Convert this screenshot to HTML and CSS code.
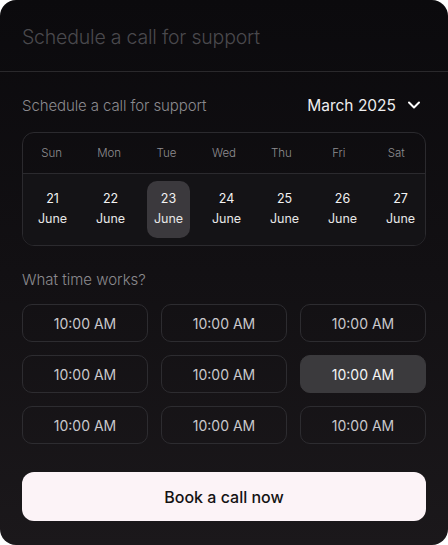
FILE: index.html
```html
<!DOCTYPE html>
<html>
<head>
<meta charset="utf-8">
<link rel="stylesheet" href="styles.css">
</head>
<body>
<div class="card">
  <div class="header">Schedule a call for support</div>
  <div class="content">
    <div class="row-title">
      <span class="subtitle">Schedule a call for support</span>
      <span class="month">March 2025
        <svg class="chev" width="14" height="14" viewBox="0 0 14 14"><path d="M2 4.5 L7 9.5 L12 4.5" fill="none" stroke="#fff" stroke-width="2" stroke-linecap="round" stroke-linejoin="round"/></svg>
      </span>
    </div>
    <div class="calendar">
      <div class="days">
        <span>Sun</span><span>Mon</span><span>Tue</span><span>Wed</span><span>Thu</span><span>Fri</span><span>Sat</span>
      </div>
      <div class="dates">
        <div class="date"><span class="num">21</span><span class="mon">June</span></div>
        <div class="date"><span class="num">22</span><span class="mon">June</span></div>
        <div class="date selected"><span class="num">23</span><span class="mon">June</span></div>
        <div class="date"><span class="num">24</span><span class="mon">June</span></div>
        <div class="date"><span class="num">25</span><span class="mon">June</span></div>
        <div class="date"><span class="num">26</span><span class="mon">June</span></div>
        <div class="date"><span class="num">27</span><span class="mon">June</span></div>
      </div>
    </div>
    <div class="label">What time works?</div>
    <div class="times">
      <div class="slot">10:00 AM</div>
      <div class="slot">10:00 AM</div>
      <div class="slot">10:00 AM</div>
      <div class="slot">10:00 AM</div>
      <div class="slot">10:00 AM</div>
      <div class="slot active">10:00 AM</div>
      <div class="slot">10:00 AM</div>
      <div class="slot">10:00 AM</div>
      <div class="slot">10:00 AM</div>
    </div>
    <button class="book">Book a call now</button>
  </div>
</div>
</body>
</html>
```
FILE: styles.css
```css
* { box-sizing: border-box; }
html, body { margin: 0; padding: 0; background: #fff; }
body { font-family: Inter, "Noto Sans", sans-serif; }
.card {
  width: 448px;
  height: 545px;
  border-radius: 16px;
  background: linear-gradient(180deg, #0b0a0d 0%, #121013 50%, #1b181b 100%);
  overflow: hidden;
}
.header {
  height: 72px;
  border-bottom: 1px solid #2a292c;
  padding: 2px 22px 0;
  display: flex;
  align-items: center;
  font-size: 19.5px;
  font-weight: 300;
  color: #4a494d;
  letter-spacing: -0.2px;
}
.content { padding: 22px 22px 0; }
.row-title {
  display: flex;
  justify-content: space-between;
  align-items: center;
  height: 22px;
}
.subtitle { font-size: 15px; font-weight: 300; color: #8b8a8e; letter-spacing: -0.1px; }
.month { font-size: 15.5px; color: #eeeeee; display: flex; align-items: center; gap: 11px; padding-right: 5px; }
.calendar {
  margin-top: 16px;
  border: 1px solid #2b2a2e;
  border-radius: 12px;
  overflow: hidden;
}
.days {
  display: grid;
  grid-template-columns: repeat(7, 1fr);
  height: 41px;
  align-items: center;
  border-bottom: 1px solid #2b2a2e;
  font-size: 11.5px;
  font-weight: 300;
  color: #8f8e92;
  text-align: center;
}
.dates {
  display: grid;
  grid-template-columns: repeat(7, 1fr);
  background: #141316;
  padding: 7px 3px 7px 8px;
  column-gap: 15px;
}
.date {
  height: 57px;
  border-radius: 10px;
  display: flex;
  flex-direction: column;
  align-items: center;
  justify-content: center;
  gap: 5px;
  font-size: 12.5px;
  color: #f2f2f2;
}
.date .num { margin-top: -2px; }
.date .mon { color: #e6e6e6; }
.date.selected { background: #3b393d; }
.label {
  margin-top: 24px;
  font-size: 15px;
  font-weight: 300;
  color: #8b8a8e;
  height: 20px;
}
.times {
  margin-top: 14px;
  display: grid;
  grid-template-columns: repeat(3, 1fr);
  gap: 13px;
}
.slot {
  height: 38px;
  border: 1px solid #2d2c30;
  border-radius: 10px;
  display: flex;
  align-items: center;
  justify-content: center;
  font-size: 14px;
  color: #c9c8cc;
}
.slot.active { background: #3b3a3d; border-color: #3b3a3d; color: #f4f4f4; }
.book {
  margin-top: 28px;
  width: 100%;
  height: 49px;
  border: none;
  border-radius: 12px;
  background: #fcf3f7;
  color: #141214;
  font-family: Inter, "Noto Sans", sans-serif;
  font-size: 16px;
  font-weight: 500;
}
```
